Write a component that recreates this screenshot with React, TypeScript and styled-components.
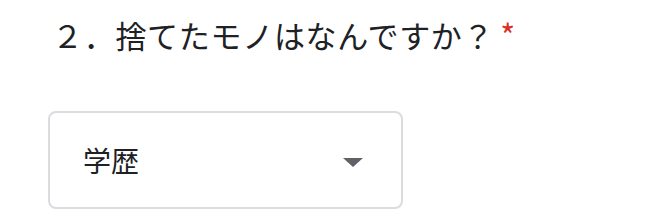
import React from "react";
import styled, { createGlobalStyle } from "styled-components";

const GlobalStyle = createGlobalStyle`
  html, body {
    margin: 0;
    padding: 0;
    background: #ffffff;
  }
  body {
    font-family: "Noto Sans CJK JP", "Noto Sans", sans-serif;
    color: #202124;
  }
`;

const Question = styled.section`
  display: flex;
  flex-direction: column;
  align-items: flex-start;
  padding: 12px 0 0 48px;
`;

const Title = styled.h2`
  margin: 0 0 0 4px;
  font-size: 31px;
  font-weight: 400;
  line-height: 44px;
  letter-spacing: 0.7px;
  color: #202124;
`;

const Required = styled.span`
  color: #d93025;
  margin-left: 6px;
  font-size: 32px;
`;

const Select = styled.div`
  margin-top: 54px;
  width: 355px;
  height: 98px;
  box-sizing: border-box;
  border: 2px solid #dadce0;
  border-radius: 8px;
  display: flex;
  align-items: center;
  justify-content: space-between;
  padding: 0 38px 0 33px;
`;

const Value = styled.span`
  font-size: 28px;
  color: #202124;
`;

const Caret = styled.span`
  width: 0;
  height: 0;
  border-left: 10px solid transparent;
  border-right: 10px solid transparent;
  border-top: 9px solid #5f6368;
  margin-top: 4px;
`;

export default function App() {
  return (
    <>
      <GlobalStyle />
      <Question>
        <Title>
          ２．捨てたモノはなんですか？<Required>*</Required>
        </Title>
        <Select>
          <Value>学歴</Value>
          <Caret />
        </Select>
      </Question>
    </>
  );
}
